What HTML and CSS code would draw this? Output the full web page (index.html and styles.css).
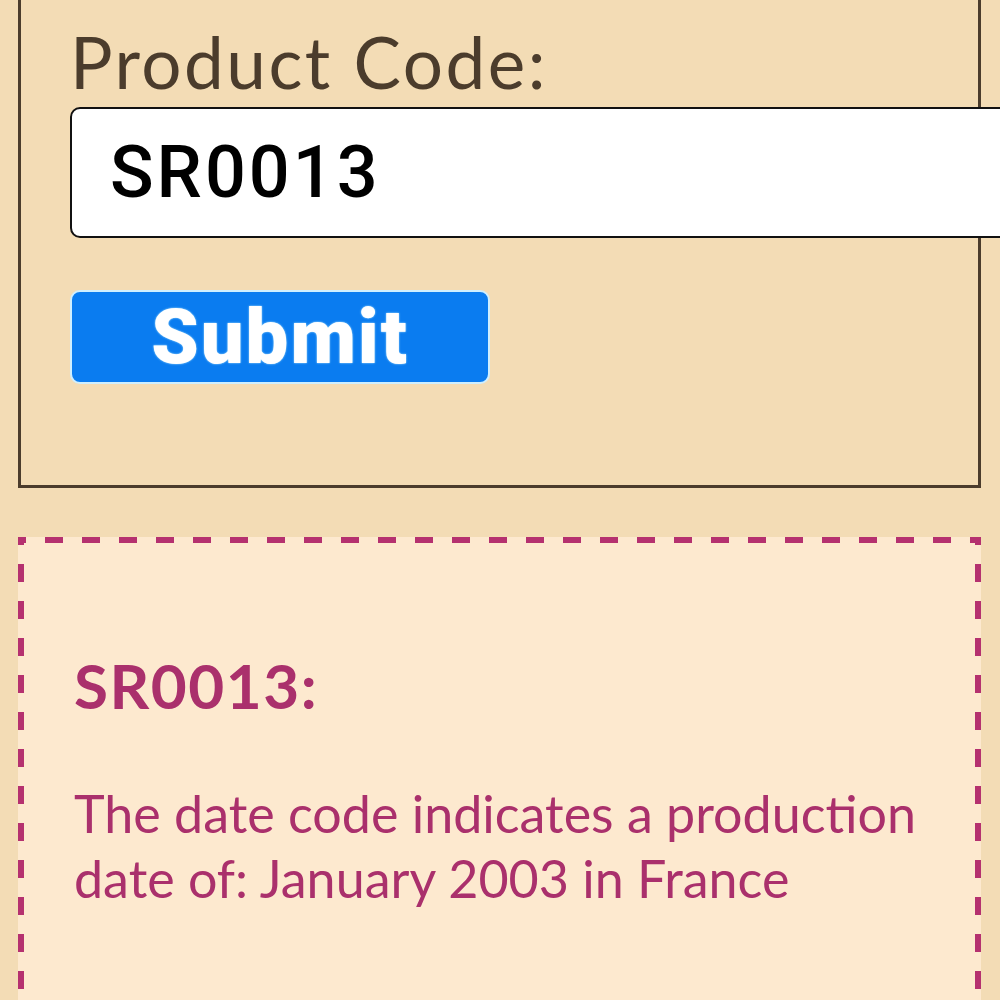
FILE: index.html
```html
<!DOCTYPE html>
<html lang="en">
<head>
    <meta charset="UTF-8">
    <meta name="viewport" content="width=device-width, initial-scale=1.0">
    <title>Date Code Lookup</title>
    <link rel="stylesheet" href="styles.css">
</head>
<body>

    <form class="lookup-form" onsubmit="return false;">
        <label class="field-label" for="code">Product Code:</label>
        <input class="code-input" id="code" type="text" value="SR0013">
        <button class="submit-btn" type="submit">Submit</button>
    </form>

    <div class="result">
        <h3 class="result-title">SR0013:</h3>
        <p class="result-text">The date code indicates a production date of: January 2003 in France</p>
    </div>

</body>
</html>
```

FILE: styles.css
```css
body {
    margin: 0;
    padding: 0 19px 0 18px;
    background-color: #f3dcb5;
    font-family: Lato, "Open Sans", sans-serif;
    overflow: hidden;
}
.lookup-form {
    margin-top: -20px;
    border: 3px solid #4b3c2c;
    padding: 34px 0 101px 49px;
}
.field-label {
    display: block;
    font-size: 71px;
    line-height: 90px;
    letter-spacing: 2.5px;
    color: #4b3c2c;
}
.code-input {
    display: block;
    box-sizing: border-box;
    width: 960px;
    height: 131px;
    margin: 0;
    padding: 0 0 0 38px;
    border: 2px solid #111;
    border-radius: 10px;
    background: #fff;
    font-family: Roboto, "Liberation Sans", sans-serif;
    font-weight: 500;
    font-size: 72px;
    letter-spacing: 3px;
    color: #000;
}
.submit-btn {
    display: block;
    box-sizing: border-box;
    width: 420px;
    height: 94px;
    margin-top: 52px;
    border: 2px solid #cfefff;
    border-radius: 10px;
    background-color: #0a7cf0;
    color: #fff;
    font-family: Roboto, "Liberation Sans", sans-serif;
    font-weight: 900;
    font-size: 76px;
    letter-spacing: 2px;
    line-height: 1;
    text-shadow: 0 0 2px #c9f2ff;
}
.result {
    margin-top: 49px;
    padding: 111px 56px 80px 56px;
    min-height: 400px;
    background:
        repeating-linear-gradient(90deg, #b5316f 0 8px, transparent 8px 27px, #b5316f 27px 37px) top left / 100% 6px no-repeat,
        repeating-linear-gradient(90deg, #b5316f 0 8px, transparent 8px 27px, #b5316f 27px 37px) bottom left / 100% 6px no-repeat,
        repeating-linear-gradient(180deg, #b5316f 0 8px, transparent 8px 27px, #b5316f 27px 37px) top left / 6px 100% no-repeat,
        repeating-linear-gradient(180deg, #b5316f 0 8px, transparent 8px 27px, #b5316f 27px 37px) top right / 6px 100% no-repeat,
        #fde9cf;
}
.result-title {
    margin: 0 0 59px 0;
    font-size: 62px;
    line-height: 74px;
    font-weight: 700;
    letter-spacing: 1.5px;
    color: #aa306c;
}
.result-text {
    margin: 0;
    font-size: 52px;
    line-height: 65px;
    color: #aa306c;
}
```
